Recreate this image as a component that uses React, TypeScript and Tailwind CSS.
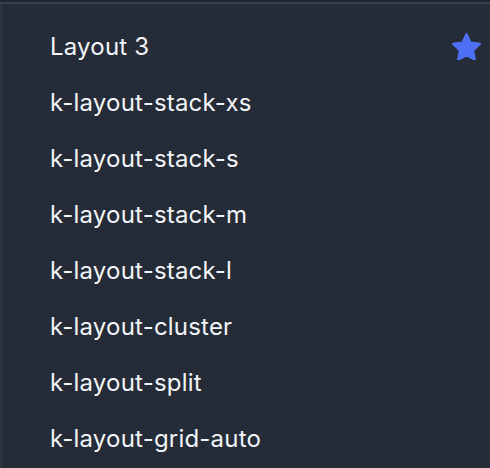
import React from "react";

const items = [
  "Layout 3",
  "k-layout-stack-xs",
  "k-layout-stack-s",
  "k-layout-stack-m",
  "k-layout-stack-l",
  "k-layout-cluster",
  "k-layout-split",
  "k-layout-grid-auto",
];

export default function App() {
  return (
    <div
      className="w-[490px] h-[468px] bg-[#252c38] overflow-hidden flex flex-col"
      style={{ fontFamily: "Inter, 'Noto Sans', sans-serif" }}
    >
      <div className="h-[2px] bg-[#1e2530]" />
      <div className="h-[2px] bg-[#3a424e]" />
      <div className="flex flex-col pt-[15px] border-l-2 border-[#2e3540] flex-1">
        {items.map((t, i) => (
          <div key={t} className="h-[56px] flex items-center pl-[48px] pr-[9px]">
            <span className="text-[24px] tracking-[0.2px] text-[#f2f4f7] flex-1 leading-none">{t}</span>
            {i === 0 && (
              <svg width="29" height="27" viewBox="2.1 2.1 19.8 18.6" className="-mt-[1px]">
                <path
                  d="M12 2.8l2.85 5.9 6.5.88-4.75 4.5 1.17 6.45L12 17.45l-5.77 3.08 1.17-6.45-4.75-4.5 6.5-.88z"
                  fill="#4d70f4"
                  stroke="#4d70f4"
                  strokeWidth="1.4"
                  strokeLinejoin="round"
                />
              </svg>
            )}
          </div>
        ))}
      </div>
    </div>
  );
}
